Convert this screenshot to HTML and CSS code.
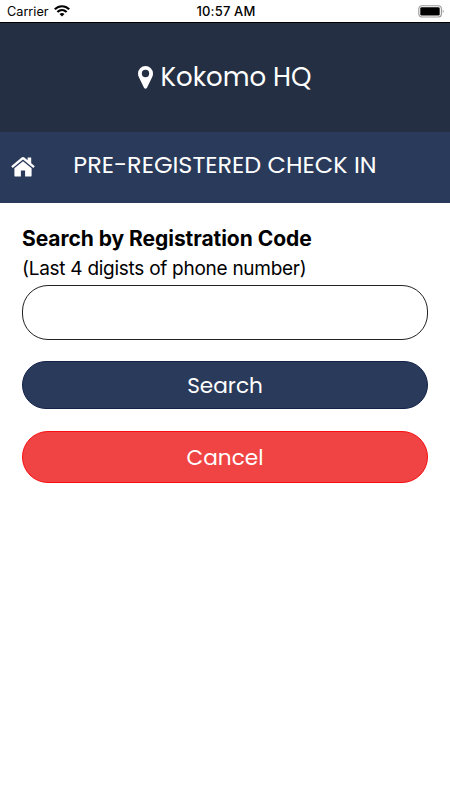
FILE: index.html
```html
<!DOCTYPE html>
<html lang="en">
<head>
    <meta charset="UTF-8">
    <meta name="viewport" content="width=device-width, initial-scale=1.0">
    <title>Pre-Registered Check In</title>
    <link rel="stylesheet" href="styles.css">
</head>
<body>
    <div class="status-bar">
        <div class="carrier">
            <span class="carrier-name">Carrier</span>
            <svg class="wifi" viewBox="0 0 16 12" width="16" height="12">
                <path d="M.8 4.3C5 .2 11 .2 15.2 4.3M3.4 7C6.2 4.3 9.8 4.3 12.6 7" fill="none" stroke="#000" stroke-width="2.2"/>
                <path d="M5.5 9Q8 6.9 10.5 9L8 11.6Z"/>
            </svg>
        </div>
        <span class="clock">10:57 AM</span>
        <svg class="battery" viewBox="0 0 27 13" width="27" height="13">
            <rect x=".8" y=".8" width="22.6" height="11.2" rx="3" fill="#fff" stroke="#999" stroke-width="1.1"/>
            <rect x="2.3" y="2.3" width="19.4" height="8.2" rx="1.3"/>
            <path d="M24.8 4.6Q26.6 6.4 24.8 8.2Z" fill="#777"/>
        </svg>
    </div>

    <header class="location">
        <svg class="pin" viewBox="0 0 15 23" width="15" height="23">
            <path fill="#fff" fill-rule="evenodd" d="M7.5 0A7.5 7.5 0 0 0 0 7.5C0 9 .3 10.1.8 11.1L6 21.8Q7.5 23.6 9 21.8L14.2 11.1C14.7 10.1 15 9 15 7.5A7.5 7.5 0 0 0 7.5 0ZM7.5 3.8A3.7 3.7 0 1 1 7.5 11.2A3.7 3.7 0 0 1 7.5 3.8Z"/>
        </svg>
        <span class="location-name">Kokomo HQ</span>
    </header>

    <nav class="title-bar">
        <a class="home" href="#" aria-label="Home">
            <svg viewBox="0 0 24 20" width="24" height="20">
                <path fill="#fff" d="M12 4.2L20.6 11.3V18.4Q20.6 19.6 19.4 19.6H14.1V13.6H9.9V19.6H4.6Q3.4 19.6 3.4 18.4V11.3Z"/>
                <path fill="#fff" d="M10.6.6Q12 -.5 13.4.6L16.6 3.3V.5H20.2V6.2L23.8 9.2L22.3 11L12 2.6L1.7 11L.2 9.2Z"/>
            </svg>
        </a>
        <h1>PRE-REGISTERED CHECK IN</h1>
    </nav>

    <form class="search-form">
        <label class="code-label" for="code">Search by Registration Code</label>
        <p class="hint">(Last 4 digists of phone number)</p>
        <input type="text" id="code">
        <button type="button" class="btn search-btn">Search</button>
        <button type="button" class="btn cancel-btn">Cancel</button>
    </form>
</body>
</html>
```

FILE: styles.css
```css
* {
    box-sizing: border-box;
}

body {
    margin: 0;
    min-height: 800px;
    background: #fff;
    color: #000;
    font-family: Inter, "Liberation Sans", sans-serif;
}

.status-bar {
    display: grid;
    grid-template-columns: 1fr auto 1fr;
    align-items: center;
    height: 23px;
    padding: 0 5px 0 7px;
    border-bottom: 1px solid #000;
    font-size: 13px;
}

.carrier {
    display: flex;
    align-items: center;
    gap: 5px;
}

.carrier-name {
    font-size: 12.7px;
}

.clock {
    font-weight: 500;
    letter-spacing: 0.15px;
}

.battery {
    justify-self: end;
}

.location {
    display: flex;
    align-items: center;
    justify-content: center;
    gap: 7px;
    height: 109px;
    background: #242f43;
    color: #fff;
}

.location-name,
.title-bar h1,
.btn {
    font-family: Poppins, Inter, sans-serif;
    font-weight: 400;
}

.location-name {
    font-size: 26px;
}

.title-bar {
    display: grid;
    grid-template-columns: 24px 1fr 24px;
    align-items: center;
    height: 71px;
    padding: 0 11px;
    background: #2a3a5a;
    color: #fff;
}

.home {
    height: 22px;
}

.home svg {
    display: block;
}

.title-bar h1 {
    margin: 0;
    padding-bottom: 6px;
    font-size: 23.9px;
    text-align: center;
    white-space: nowrap;
}

.search-form {
    display: flex;
    flex-direction: column;
    padding: 21px 22px;
}

.code-label {
    font-size: 21px;
    font-weight: 700;
    line-height: 30px;
    letter-spacing: -0.05px;
}

.hint {
    margin: 0;
    font-size: 19px;
    line-height: 30px;
    letter-spacing: -0.27px;
}

input {
    height: 55px;
    margin-top: 1px;
    padding: 0 24px;
    border: 1px solid #222;
    border-radius: 26px;
    background: #fff;
    font-size: 20px;
}

.btn {
    padding: 0;
    border-radius: 26px;
    color: #fff;
    font-size: 21.6px;
}

.search-btn {
    height: 48px;
    margin-top: 21px;
    border: 1px solid #14224a;
    background: #2a3a5a;
}

.cancel-btn {
    height: 52px;
    margin-top: 22px;
    border: 1px solid #f90d10;
    background: #f04444;
}
```
